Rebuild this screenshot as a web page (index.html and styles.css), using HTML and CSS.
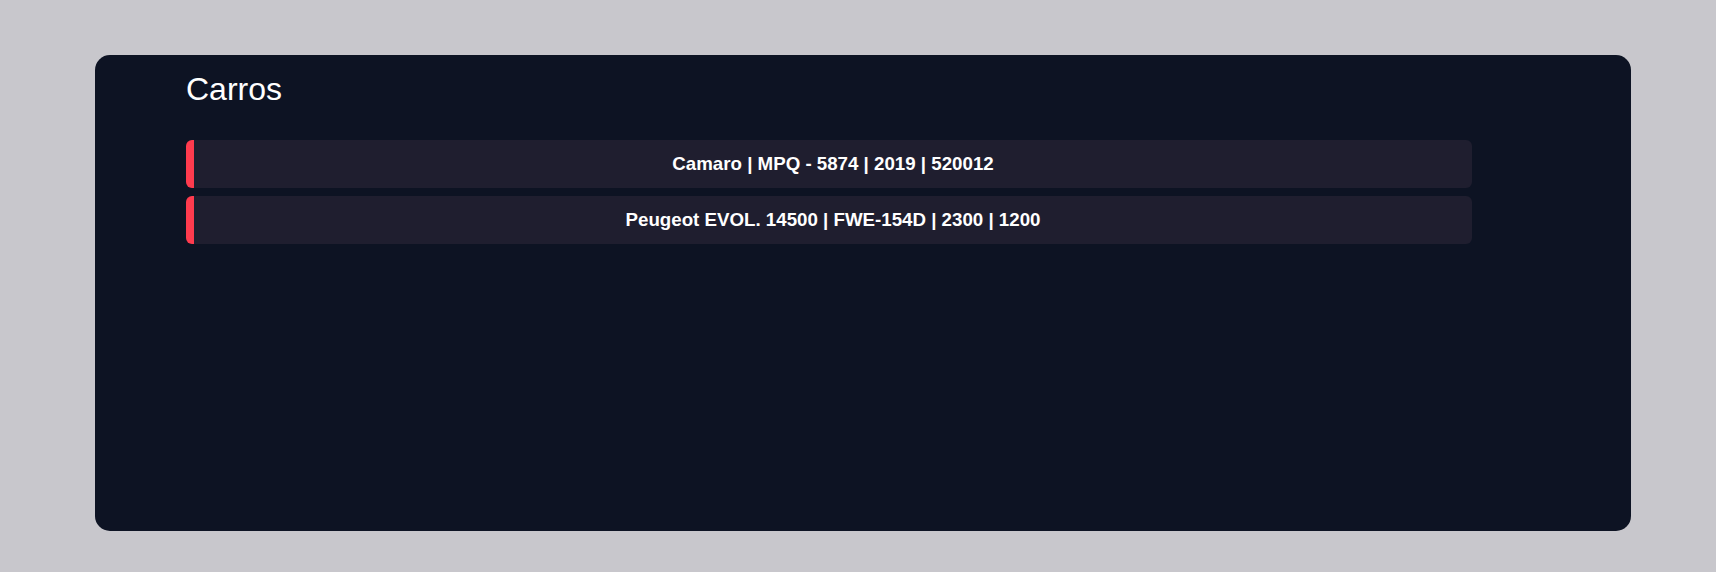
FILE: index.html
```html
<!DOCTYPE html>
<html lang="pt">
<head>
<meta charset="utf-8">
<title>Carros</title>
<link rel="stylesheet" href="styles.css">
</head>
<body>
<main class="panel">
  <h1 class="title">Carros</h1>
  <ul class="car-list">
    <li class="car-item">Camaro | MPQ - 5874 | 2019 | 520012</li>
    <li class="car-item">Peugeot EVOL. 14500 | FWE-154D | 2300 | 1200</li>
  </ul>
</main>
</body>
</html>
```
FILE: styles.css
```css
html, body {
  margin: 0;
  padding: 0;
}
body {
  background: #c8c7cc;
  font-family: "Liberation Sans", Arial, sans-serif;
  padding: 55px 85px 41px 95px;
  box-sizing: border-box;
  height: 572px;
}
.panel {
  background: #0d1323;
  border-radius: 15px;
  height: 476px;
  box-sizing: border-box;
  padding: 16px 159px 0 91px;
}
.title {
  margin: 0;
  color: #ffffff;
  font-size: 32px;
  font-weight: normal;
  line-height: 37px;
}
.car-list {
  list-style: none;
  margin: 32px 0 0;
  padding: 0;
  display: flex;
  flex-direction: column;
  gap: 8px;
}
.car-item {
  height: 48px;
  display: flex;
  align-items: center;
  justify-content: center;
  background: #1f1e2f;
  border-left: 8px solid #ff3b4e;
  border-radius: 6px;
  color: #ffffff;
  font-weight: bold;
  font-size: 18.72px;
}
```
